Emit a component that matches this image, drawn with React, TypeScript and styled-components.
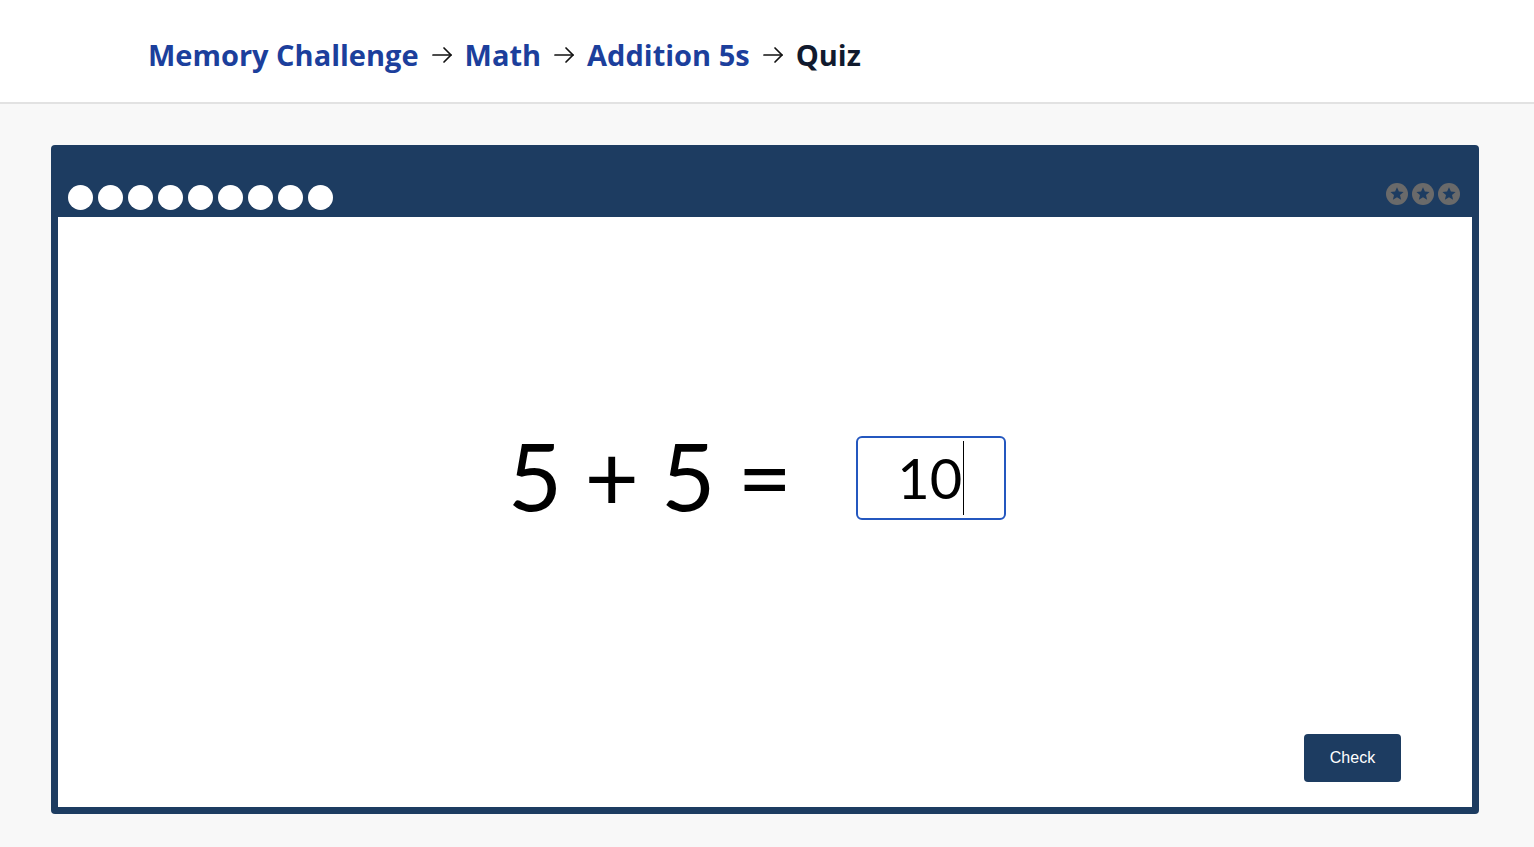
import React from "react";
import styled, { createGlobalStyle } from "styled-components";

const Global = createGlobalStyle`
  html, body { margin: 0; padding: 0; }
  body { background: #f8f8f8; font-family: "Open Sans", "Liberation Sans", sans-serif; }
`;

const Page = styled.div`
  min-height: 847px;
  background: #f8f8f8;
`;

const Header = styled.header`
  height: 104px;
  background: #ffffff;
  border-bottom: 2px solid #e2e2e2;
  box-sizing: border-box;
  display: flex;
  align-items: center;
  padding-left: 148px;
  padding-top: 7px;
`;

const Crumbs = styled.nav`
  display: flex;
  align-items: center;
  gap: 11px;
`;

const Crumb = styled.a<{ $current?: boolean }>`
  font-family: "Open Sans", "Liberation Sans", sans-serif;
  font-weight: 700;
  font-size: 29px;
  letter-spacing: 0;
  color: ${(p) => (p.$current ? "#111a2e" : "#1c3f9c")};
  text-decoration: none;
`;

const Arrow = styled.svg`
  width: 24px;
  height: 24px;
  flex: none;
`;

const Main = styled.main`
  padding: 41px 55px 0 51px;
`;

const Card = styled.section`
  background: #1d3c61;
  border-radius: 4px;
  padding: 0 7px 7px 7px;
  display: flex;
  flex-direction: column;
`;

const TopBar = styled.div`
  height: 72px;
  display: flex;
  justify-content: space-between;
  align-items: flex-end;
  padding: 0 12px 7px 10px;
  box-sizing: border-box;
`;

const Dots = styled.div`
  display: flex;
  gap: 5px;
`;

const Dot = styled.span`
  width: 25px;
  height: 25px;
  border-radius: 50%;
  background: #ffffff;
`;

const Stars = styled.div`
  display: flex;
  gap: 4px;
  margin-bottom: 5px;
`;

const Panel = styled.div`
  background: #ffffff;
  height: 590px;
  display: flex;
  flex-direction: column;
`;

const Equation = styled.div`
  margin-top: 217px;
  display: flex;
  align-items: center;
  justify-content: center;
  gap: 64px;
  padding-right: 16px;
`;

const Expr = styled.span`
  font-family: Lato, "Noto Sans", sans-serif;
  font-size: 94px;
  line-height: 1;
  color: #000;
  word-spacing: -2px;
  margin-top: -6px;
`;

const AnswerBox = styled.div`
  width: 150px;
  height: 84px;
  box-sizing: border-box;
  border: 2px solid #2457bf;
  border-radius: 6px;
  display: flex;
  align-items: center;
  justify-content: flex-end;
  padding-right: 40px;
`;

const AnswerText = styled.span`
  font-family: Lato, "Noto Sans", sans-serif;
  font-size: 56px;
  line-height: 1;
  color: #000;
`;

const Caret = styled.span`
  width: 1px;
  height: 74px;
  background: #000;
  margin-left: 1px;
`;

const Footer = styled.div`
  margin-top: auto;
  display: flex;
  justify-content: flex-end;
  padding: 0 71px 25px 0;
`;

const CheckButton = styled.button`
  width: 97px;
  height: 48px;
  border: none;
  border-radius: 4px;
  background: #1d3c61;
  color: #ffffff;
  font-family: "Liberation Sans", Arial, sans-serif;
  font-size: 16px;
  cursor: pointer;
`;

const StarIcon = () => (
  <svg width="22" height="22" viewBox="0 0 22 22">
    <circle cx="11" cy="11" r="11" fill="#6a6a6a" />
    <polygon
      points="11,4.2 12.9,8.6 17.6,9 14,12.1 15.1,16.8 11,14.3 6.9,16.8 8,12.1 4.4,9 9.1,8.6"
      fill="#1d3c61"
    />
  </svg>
);

const ArrowIcon = () => (
  <Arrow viewBox="0 0 24 24" fill="none" stroke="#111" strokeWidth="1.7" strokeLinecap="round" strokeLinejoin="round">
    <path d="M3 12h18" />
    <path d="M14 5l7 7-7 7" />
  </Arrow>
);

export default function App() {
  return (
    <Page>
      <Global />
      <Header>
        <Crumbs>
          <Crumb href="#">Memory Challenge</Crumb>
          <ArrowIcon />
          <Crumb href="#">Math</Crumb>
          <ArrowIcon />
          <Crumb href="#">Addition 5s</Crumb>
          <ArrowIcon />
          <Crumb $current>Quiz</Crumb>
        </Crumbs>
      </Header>
      <Main>
        <Card>
          <TopBar>
            <Dots>
              {Array.from({ length: 9 }).map((_, i) => (
                <Dot key={i} />
              ))}
            </Dots>
            <Stars>
              <StarIcon />
              <StarIcon />
              <StarIcon />
            </Stars>
          </TopBar>
          <Panel>
            <Equation>
              <Expr>5 + 5 =</Expr>
              <AnswerBox>
                <AnswerText>10</AnswerText>
                <Caret />
              </AnswerBox>
            </Equation>
            <Footer>
              <CheckButton>Check</CheckButton>
            </Footer>
          </Panel>
        </Card>
      </Main>
    </Page>
  );
}
